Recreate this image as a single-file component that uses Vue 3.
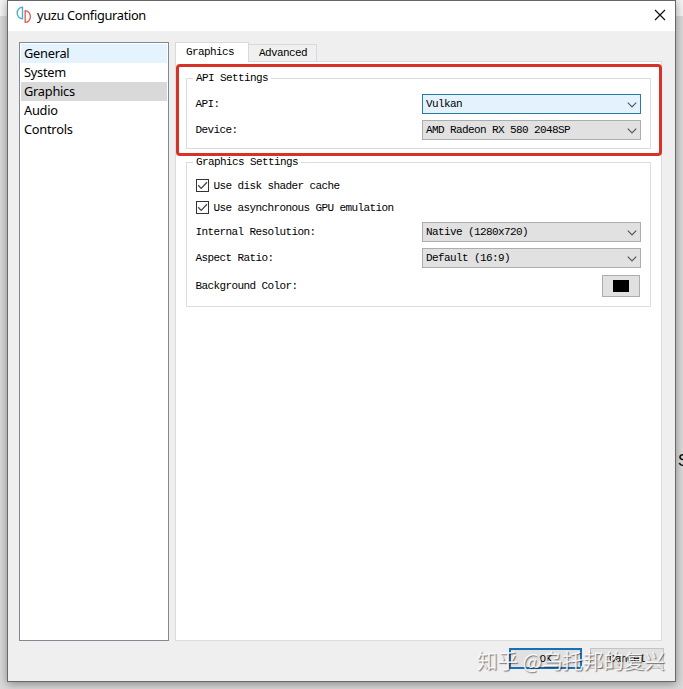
<script setup>
import { ref } from 'vue'

const categories = ['General', 'System', 'Graphics', 'Audio', 'Controls']
const hovered = ref('General')
const selected = ref('Graphics')
const apiRows = [
  { label: 'API:', value: 'Vulkan', active: true },
  { label: 'Device:', value: 'AMD Radeon RX 580 2048SP', active: false },
]
const checks = ['Use disk shader cache', 'Use asynchronous GPU emulation']
const graphicsRows = [
  { label: 'Internal Resolution:', value: 'Native (1280x720)' },
  { label: 'Aspect Ratio:', value: 'Default (16:9)' },
]
</script>

<template>
  <div class="desktop">
    <span class="behind">S</span>
    <div class="window">
      <header class="titlebar">
        <svg class="logo" width="16" height="18" viewBox="0 0 16 18" fill="none" stroke-width="1.4">
          <path d="M6.500 1.200v11.600C3.500 12.800 1.200 10.200 1.200 7S3.500 1.200 6.500 1.200z" stroke="#45b3cc" />
          <path d="M9.200 4.800v11.600c3 0 5.200-2.600 5.200-5.800S12.200 4.800 9.200 4.800z" stroke="#dd665f" />
        </svg>
        <h1>yuzu Configuration</h1>
        <svg class="close" width="12" height="12" viewBox="0 0 12 12" stroke="#111" stroke-width="1.2">
          <path d="M1 1l10 10M11 1L1 11" />
        </svg>
      </header>

      <div class="body">
        <ul class="categories">
          <li
            v-for="c in categories"
            :key="c"
            :class="{ hovered: c === hovered, selected: c === selected }"
          >{{ c }}</li>
        </ul>

        <section class="settings">
          <nav class="tabs">
            <span class="tab current">Graphics</span>
            <span class="tab">Advanced</span>
          </nav>
          <div class="pane">
            <div class="group api">
              <span class="legend">API Settings</span>
              <div v-for="r in apiRows" :key="r.label" class="row">
                <span>{{ r.label }}</span>
                <div class="combo" :class="{ active: r.active }">
                  <span>{{ r.value }}</span>
                  <svg width="10" height="6" viewBox="0 0 10 6" fill="none" stroke="#555" stroke-width="1.2"><path d="M.8.7L5 4.900 9.200.7" /></svg>
                </div>
              </div>
            </div>
            <div class="group graphics">
              <span class="legend">Graphics Settings</span>
              <div v-for="c in checks" :key="c" class="check">
                <svg width="13" height="13" viewBox="0 0 13 13" fill="none">
                  <rect x=".5" y=".5" width="12" height="12" fill="#fff" stroke="#333" />
                  <path d="M2.200 6.300l3 3.100 5.800-6.200" stroke="#444" stroke-width="1.3" />
                </svg>
                <span>{{ c }}</span>
              </div>
              <div v-for="r in graphicsRows" :key="r.label" class="row">
                <span>{{ r.label }}</span>
                <div class="combo">
                  <span>{{ r.value }}</span>
                  <svg width="10" height="6" viewBox="0 0 10 6" fill="none" stroke="#555" stroke-width="1.2"><path d="M.8.7L5 4.900 9.200.7" /></svg>
                </div>
              </div>
              <div class="row color">
                <span>Background Color:</span>
                <button class="swatch"><i></i></button>
              </div>
            </div>
            <div class="highlight"></div>
          </div>
        </section>
      </div>

      <footer class="actions">
        <button class="action primary">OK</button>
        <button class="action cancel">Cancel</button>
      </footer>
    </div>
    <div class="watermark">知乎 @乌托邦的复兴</div>
  </div>
</template>

<style>
body { margin: 0; overflow: hidden; }
</style>

<style scoped>
* { box-sizing: border-box; }
.desktop {
  position: relative;
  width: 683px;
  height: 689px;
  padding: 0 0 0 7px;
  overflow: hidden;
  background: linear-gradient(#f4f4f4 0 16px, #dadada 16px);
  font: 11px/14px "Liberation Mono", monospace;
  letter-spacing: -0.6px;
  color: #000;
}
.behind {
  position: absolute;
  left: 678px;
  top: 452px;
  font: 16px/18px "Liberation Sans", sans-serif;
}
.window {
  position: relative;
  display: flex;
  flex-direction: column;
  width: 669px;
  height: 682px;
  border: 1px solid #686868;
  background: #efefef;
  box-shadow: 0 2px 9px rgba(0, 0, 0, .38);
}
.titlebar {
  display: flex;
  align-items: center;
  height: 30px;
  padding: 0 9px 2px 8px;
  background: #fff;
}
h1 {
  flex: 1;
  margin: 0 0 0 5px;
  font: 12.8px/18px "Noto Sans", sans-serif;
  letter-spacing: -0.32px;
}
.close { display: block; }
.body {
  display: flex;
  gap: 6px;
  height: 610px;
  padding: 11px 13px 0 11px;
}
.categories {
  width: 150px;
  height: 599px;
  margin: 0;
  padding: 1px;
  border: 1px solid #828790;
  background: #fff;
  list-style: none;
  font: 12.8px/19px "Noto Sans", sans-serif;
  letter-spacing: -0.25px;
}
.categories li { height: 19px; padding-left: 3px; }
.hovered { background: #e5f3ff; }
.selected { background: #d9d9d9; }
.settings { width: 487px; }
.tabs { display: flex; align-items: flex-end; height: 19px; }
.tab {
  width: 68px;
  height: 17px;
  padding: 1px 0 0 10px;
  border: 1px solid #d9d9d9;
  border-left: 0;
  border-bottom: 0;
  background: #f0f0f0;
}
.tab.current {
  position: relative;
  z-index: 1;
  width: 74px;
  height: 20px;
  margin-bottom: -1px;
  padding-top: 2px;
  border-left: 1px solid #d9d9d9;
  background: #fff;
}
.pane {
  position: relative;
  height: 580px;
  padding: 16px 10px 0;
  border: 1px solid #dcdcdc;
  background: #fff;
}
.group {
  position: relative;
  border: 1px solid #dcdcdc;
  padding-right: 9px;
  padding-left: 8.5px;
}
.legend {
  position: absolute;
  left: 6px;
  top: -8px;
  padding: 0 3px;
  background: #fff;
}
.api { height: 71px; padding-top: 15px; }
.graphics { height: 145px; margin-top: 13px; padding-top: 12px; }
.row {
  display: flex;
  align-items: center;
  justify-content: space-between;
  height: 20px;
  margin-bottom: 6px;
}
.combo {
  display: flex;
  align-items: center;
  justify-content: space-between;
  width: 219px;
  height: 20px;
  padding: 0 3px;
  border: 1px solid #adadad;
  background: #e1e1e1;
}
.combo svg { margin-top: 2px; }
.combo.active { border-color: #267ca5; background: #e4f2fd; }
.check {
  display: flex;
  align-items: center;
  gap: 5px;
  height: 22px;
}
.check svg { margin-bottom: 2px; }
.check + .row { margin-top: 3px; }
.row.color { height: 22px; margin-top: 7px; }
.swatch {
  display: flex;
  align-items: center;
  justify-content: center;
  width: 38px;
  height: 22px;
  margin-right: 1px;
  padding: 0;
  border: 1px solid #adadad;
  background: #e1e1e1;
}
.swatch i { width: 16px; height: 12px; background: #000; }
.highlight {
  position: absolute;
  left: 0;
  top: 2px;
  width: 486px;
  height: 92px;
  border: 3px solid #d83228;
  border-radius: 4px;
}
.actions {
  display: flex;
  justify-content: flex-end;
  gap: 8px;
  padding: 7px 11px 0;
}
.action {
  width: 74px;
  height: 21px;
  padding: 0;
  border: 1px solid #c4c4c4;
  background: #e1e1e1;
  font: inherit;
  letter-spacing: inherit;
  color: #000;
}
.action.primary { width: 73px; border: 2px solid #1b70b5; }
.watermark {
  position: absolute;
  left: 477px;
  top: 646px;
  font: 20.5px/28px "Noto Sans CJK SC", sans-serif;
  letter-spacing: 0;
  white-space: nowrap;
  color: rgba(255, 255, 255, .85);
  text-shadow: 1px 1px 1px rgba(0, 0, 0, .5);
}
</style>
